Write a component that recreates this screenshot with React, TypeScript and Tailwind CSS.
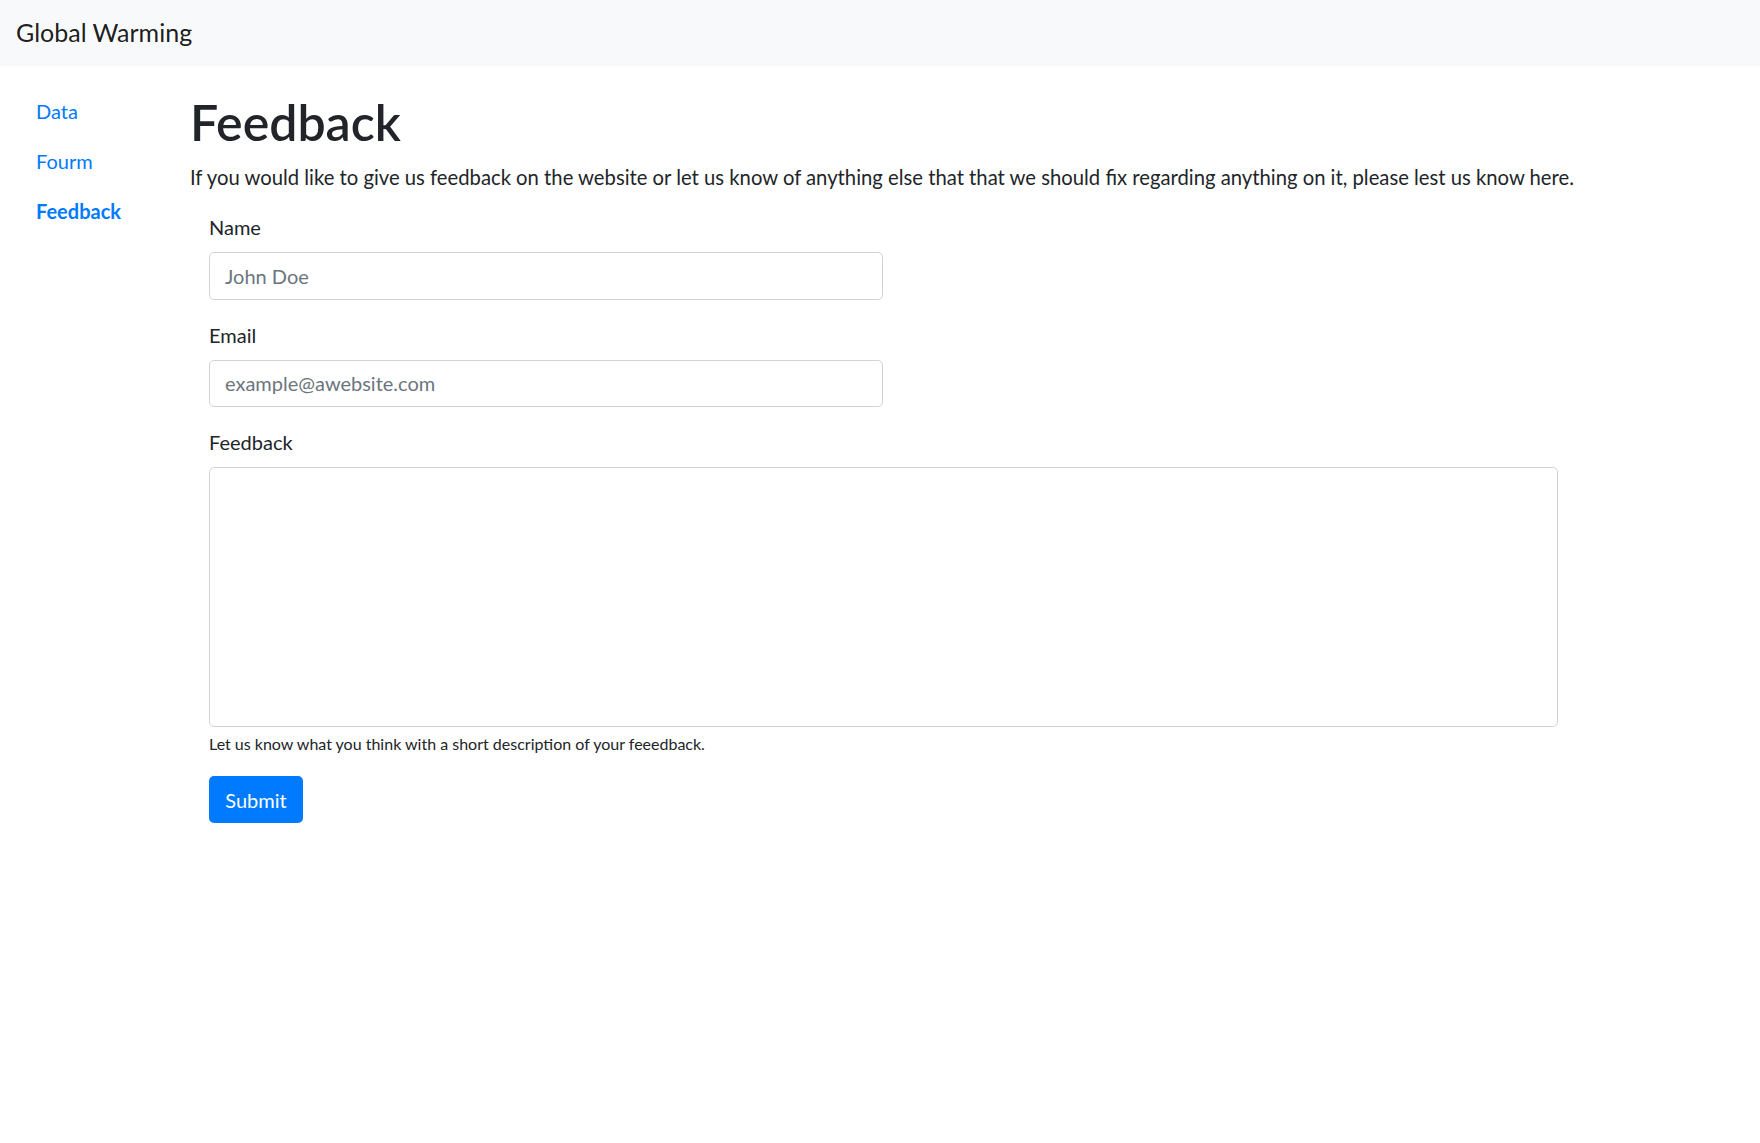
import React from 'react';

const links = [
  { label: 'Data', active: false },
  { label: 'Fourm', active: false },
  { label: 'Feedback', active: true },
];

export default function App() {
  return (
    <div className="min-h-screen bg-white font-['Lato',sans-serif] text-[20px] text-[#212529]">
      {/* Navbar */}
      <nav className="flex h-[66px] items-center bg-[#f8f9fa] px-4">
        <span className="text-[25px] leading-[1.5] text-black/90">Global Warming</span>
      </nav>

      <div className="flex">
        {/* Sidebar */}
        <aside className="w-[190px] shrink-0 pl-4 pt-5">
          <ul className="flex flex-col">
            {links.map((link) => (
              <li key={link.label}>
                <a
                  href="#"
                  className={`block px-5 py-[10px] leading-[30px] text-[#007bff] ${
                    link.active ? 'font-bold' : ''
                  }`}
                >
                  {link.label}
                </a>
              </li>
            ))}
          </ul>
        </aside>

        {/* Main */}
        <main className="flex-1 pt-[26px]">
          <h1 className="mb-[10px] text-[50px] font-semibold leading-[1.2] text-[#212529]">Feedback</h1>
          <p className="mb-5 text-[20.25px] leading-[30px]">
            If you would like to give us feedback on the website or let us know of anything else that that we
            should fix regarding anything on it, please lest us know here.
          </p>

          <form className="pl-[19px]" onSubmit={(e) => e.preventDefault()}>
            <div className="mb-5">
              <label className="mb-[10px] block leading-[30px]">Name</label>
              <input
                type="text"
                placeholder="John Doe"
                className="block h-[47.5px] w-[674px] rounded-[5px] border border-[#ced4da] px-[15px] text-[20px] text-[#495057] placeholder:text-[#6c757d] focus:outline-none"
              />
            </div>

            <div className="mb-5">
              <label className="mb-[10px] block leading-[30px]">Email</label>
              <input
                type="email"
                placeholder="example@awebsite.com"
                className="block h-[47.5px] w-[674px] rounded-[5px] border border-[#ced4da] px-[15px] text-[20px] text-[#495057] placeholder:text-[#6c757d] focus:outline-none"
              />
            </div>

            <div className="mb-5">
              <label className="mb-[10px] block leading-[30px]">Feedback</label>
              <textarea className="block h-[260px] w-[1349px] resize-none rounded-[5px] border border-[#ced4da] px-[15px] py-2 text-[20px] focus:outline-none" />
              <small className="mt-[5px] block text-[16px] leading-[24px] text-[#212529]">
                Let us know what you think with a short description of your feeedback.
              </small>
            </div>

            <button
              type="submit"
              className="h-[47px] w-[94px] rounded-[5px] bg-[#007bff] text-[20px] text-white"
            >
              Submit
            </button>
          </form>
        </main>
      </div>
    </div>
  );
}
